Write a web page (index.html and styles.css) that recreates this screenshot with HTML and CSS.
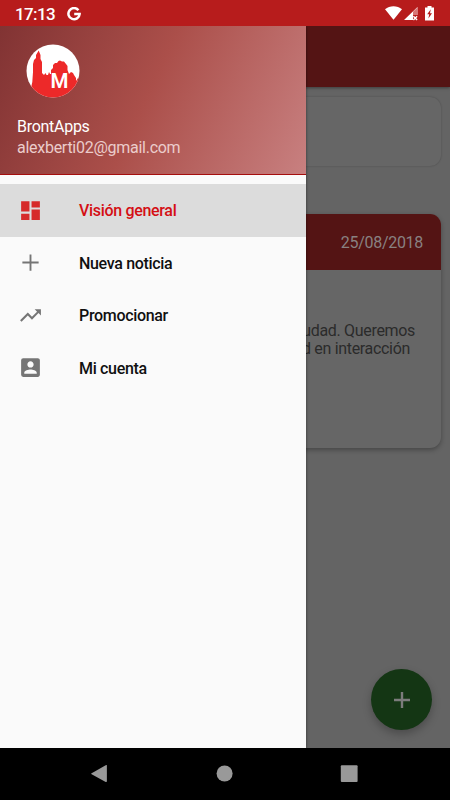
FILE: index.html
```html
<!DOCTYPE html>
<html lang="es">
<head>
<meta charset="utf-8">
<title>BrontApps</title>
<link rel="stylesheet" href="styles.css">
</head>
<body>
<div class="phone">
  <header class="status">
    <span class="clock">17:13</span>
    <svg class="google" viewBox="0 0 14 14"><path d="M11.4 3.2A5.6 5.6 0 1 0 12.6 7.1H7.2" fill="none" stroke="#fff" stroke-width="2.5"/></svg>
    <svg class="signals" viewBox="0 0 50 16">
      <path d="M0 3.2C4.8-.8 12.2-.8 17 3.2L8.5 13.8Z" fill="#fff"/>
      <path d="M32.5 1V9H28V14H19Z" fill="#fff"/>
      <path d="M33 1V9H28V5.7Z" fill="#d77777"/>
      <path d="M28.4 10.2l3.7 3.7M32.1 10.2l-3.7 3.7" stroke="#fff" stroke-width="1.4"/>
      <path d="M42.5 0h4v1.500H49V14.500H40V1.500h2.500Z" fill="#fff"/>
      <path d="M45.800 3.300l-3.600 5h2l-.8 4.200 3.600-5.300h-2Z" fill="#b71c1c"/>
    </svg>
  </header>
  <main class="screen">
    <div class="toolbar"></div>
    <section class="card summary"></section>
    <article class="card news">
      <div class="news-head">25/08/2018</div>
      <div class="news-body">
        <p class="line first">ciudad. Queremos</p>
        <p class="line second">d en interacción</p>
      </div>
    </article>
    <div class="fab"><svg viewBox="0 0 16 16"><path d="M8 0v16M0 8h16" stroke="#7c7c7c" stroke-width="2.4"/></svg></div>
    <aside class="drawer">
      <div class="profile">
        <svg class="logo" viewBox="0 0 54 54">
          <defs><clipPath id="disc"><circle cx="27" cy="27" r="26.5"/></clipPath></defs>
          <circle cx="27" cy="27" r="26.5" fill="#fff"/>
          <g clip-path="url(#disc)">
            <path d="M0 54V44H5L6.300 38L7 28V20L8 16L10 14V11L12.700 6.500L14.500 11V15L16 18V29L18 31L19.500 29L20.500 31H22L23 28L24 30H25V26L27 24V21L29 19H31L32.500 17L34 16.500L36 17.500H38L40 20L41.500 22V26L43 30L45 28L47 29L48 31L50 34V37L52 34H54V54Z" fill="#ed2929"/>
            <text x="33.500" y="43.500" class="logo-letter">M</text>
          </g>
        </svg>
        <div class="name">BrontApps</div>
        <div class="mail">alexberti02@gmail.com</div>
      </div>
      <nav class="menu">
        <div class="item active">
          <svg viewBox="0 0 24 24"><path d="M3 13h8V3H3v10zm0 8h8v-6H3v6zm10 0h8V11h-8v10zm0-18v6h8V3h-8z"/></svg>
          <span>Visión general</span>
        </div>
        <div class="item">
          <svg viewBox="0 0 24 24"><path d="M11.100 4.200h1.800v6.900h6.900v1.800h-6.900v6.900h-1.800v-6.900H4.200v-1.800h6.900z"/></svg>
          <span>Nueva noticia</span>
        </div>
        <div class="item">
          <svg viewBox="0 0 24 24"><path d="M16 6l2.290 2.290-4.880 4.880-4-4L2 16.590 3.410 18l6-6 4 4 6.300-6.290L22 12V6z"/></svg>
          <span>Promocionar</span>
        </div>
        <div class="item">
          <svg viewBox="0 0 24 24"><path d="M3 5v14a2 2 0 0 0 2 2h14c1.100 0 2-.9 2-2V5c0-1.100-.9-2-2-2H5a2 2 0 0 0-2 2zm12 4c0 1.660-1.340 3-3 3s-3-1.340-3-3 1.340-3 3-3 3 1.340 3 3zm-9 8c0-2 4-3.100 6-3.100s6 1.100 6 3.100v1H6v-1z"/></svg>
          <span>Mi cuenta</span>
        </div>
      </nav>
    </aside>
  </main>
  <footer class="navbar">
    <svg viewBox="0 0 18 18"><path d="M1.200 8.400L15.700.2Q16.900-.4 16.900.6V16Q16.900 17.500 15.700 16.900L1.200 9.100Z"/></svg>
    <svg viewBox="0 0 18 18"><circle cx="9.600" cy="8.500" r="8"/></svg>
    <svg viewBox="0 0 18 18"><rect x=".8" y=".2" width="16.800" height="16.800" rx="1"/></svg>
  </footer>
</div>
</body>
</html>
```

FILE: styles.css
```css
* { box-sizing: border-box; }
body { margin: 0; font-family: Roboto, "Liberation Sans", sans-serif; }
.phone { width: 450px; height: 800px; display: flex; flex-direction: column; overflow: hidden; }
.status { height: 26px; flex: none; display: flex; align-items: center; padding: 0 15px; background: #b71c1c; color: #fff; }
.clock { font-size: 17px; font-weight: 500; letter-spacing: -.6px; line-height: 26px; padding-top: 2px; width: 52px; }
.google { width: 14px; height: 14px; margin-top: 1px; }
.signals { width: 50px; height: 16px; margin-left: auto; margin-top: 1px; }
.screen { position: relative; height: 722px; flex: none; background: #646464; overflow: hidden; }
.toolbar { height: 61px; background: #541414; box-shadow: 0 1px 3px rgba(0,0,0,.4); }
.card { margin: 0 9px; background: #666; border-radius: 11px; overflow: hidden; }
.summary { height: 69px; margin-top: 10px; box-shadow: 0 0 2px rgba(0,0,0,.25); }
.news { height: 234px; margin-top: 48px; box-shadow: 0 2px 5px rgba(0,0,0,.3); }
.news-head { height: 56px; line-height: 58px; padding-right: 18px; text-align: right; font-size: 16px; letter-spacing: -.3px; color: #898181; background: #541414; }
.news-body { padding-top: 52px; color: #2b2b2b; font-size: 16px; letter-spacing: -.32px; }
.line { margin: 0; line-height: 18px; text-align: right; white-space: nowrap; }
.first { padding-right: 26px; }
.second { padding-right: 31px; }
.fab { position: absolute; left: 371px; top: 643px; width: 61px; height: 61px; border-radius: 50%; background: #143614; box-shadow: 0 4px 8px rgba(0,0,0,.25); display: flex; align-items: center; justify-content: center; }
.fab svg { width: 16px; height: 16px; }
.drawer { position: absolute; left: 0; top: 0; width: 306px; height: 722px; background: #fafafa; box-shadow: 0 0 3px rgba(0,0,0,.5); }
.profile { height: 149px; padding: 18px 17px 0; color: #fff; background: linear-gradient(115deg, #813333 0%, #ab4f4a 48%, #c88080 100%); border-bottom: 1px solid #a50d0d; }
.logo { display: block; width: 54px; height: 54px; margin-left: 8.500px; }
.logo-letter { font: 600 20.500px Roboto, sans-serif; fill: #fff; text-anchor: middle; }
.name { margin-top: 18px; font-size: 16px; letter-spacing: -.28px; line-height: 22px; }
.mail { font-size: 16px; letter-spacing: -.27px; line-height: 20px; color: #ebcccb; }
.menu { padding-top: 9px; }
.item { height: 52.500px; padding-left: 18px; display: flex; align-items: center; gap: 36px; font-size: 16px; letter-spacing: -.32px; font-weight: 500; color: #101010; }
.item span { padding-top: .5px; }
.item svg { width: 25px; height: 25px; fill: #757575; flex: none; }
.active { background: #dcdcdc; color: #d40f14; }
.active svg { fill: #d62a2a; }
.navbar { height: 52px; flex: none; padding: 0 92px 0 90px; background: #000; display: flex; align-items: center; justify-content: space-between; }
.navbar svg { width: 18px; height: 18px; fill: #999; overflow: visible; }
```
